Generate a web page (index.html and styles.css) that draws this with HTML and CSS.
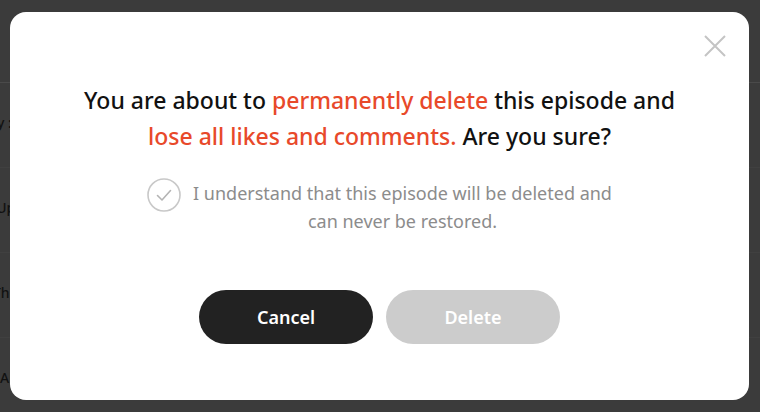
FILE: index.html
```html
<!DOCTYPE html>
<html lang="en">
<head>
    <meta charset="UTF-8">
    <meta name="viewport" content="width=device-width, initial-scale=1.0">
    <title>Delete episode</title>
    <link rel="stylesheet" href="styles.css">
</head>
<body>
    <!-- page behind the overlay -->
    <div class="page">
        <div class="page-header"></div>
        <div class="page-row"><span class="row-text">Summary :</span></div>
        <div class="page-row"><span class="row-text">Last Up</span></div>
        <div class="page-row"><span class="row-text">Theme</span></div>
        <div class="page-row"><span class="row-text">All</span></div>
    </div>

    <div class="overlay">
        <div class="modal">
            <button class="close-button" aria-label="Close">
                <svg width="22" height="22" viewBox="0 0 22 22">
                    <path d="M1 1 L21 21 M21 1 L1 21" stroke="#c4c4c4" stroke-width="2" fill="none"/>
                </svg>
            </button>

            <p class="modal-title">
                You are about to <span class="warn">permanently delete</span> this episode and<br>
                <span class="warn">lose all likes and comments.</span> Are you sure?
            </p>

            <label class="confirm-row">
                <span class="check-circle">
                    <svg width="34" height="34" viewBox="0 0 34 34">
                        <circle cx="17" cy="17" r="16" stroke="#c8c8c8" stroke-width="1.6" fill="none"/>
                        <path d="M10.5 17.5 L15 22 L23.5 12.5" stroke="#b4b4b4" stroke-width="1.6" fill="none" stroke-linecap="round" stroke-linejoin="round"/>
                    </svg>
                </span>
                <span class="confirm-text">I understand that this episode will be deleted and<br>can never be restored.</span>
            </label>

            <div class="modal-buttons">
                <button class="btn btn-cancel">Cancel</button>
                <button class="btn btn-delete" disabled>Delete</button>
            </div>
        </div>
    </div>
</body>
</html>
```

FILE: styles.css
```css
/* Delete episode dialog */
body {
    margin: 0;
    width: 760px;
    height: 412px;
    overflow: hidden;
    background-color: #3b3b3b;
    font-family: 'Noto Sans', 'Open Sans', sans-serif;
    position: relative;
}

.page {
    display: flex;
    flex-direction: column;
}

.page-header {
    height: 82px;
    border-bottom: 1px solid #4a4a4a;
}

.page-row {
    height: 84px;
    display: flex;
    align-items: center;
    border-bottom: 1px solid #404040;
    overflow: hidden;
}

.row-text {
    color: #111111;
    font-size: 14px;
    font-weight: 500;
    white-space: nowrap;
    margin-top: -6px;
    margin-left: -60px;
}

.page-row:nth-child(3) .row-text { margin-left: -35px; }
.page-row:nth-child(4) .row-text { margin-left: -7px; }
.page-row:nth-child(5) .row-text { margin-left: 0; }

.overlay {
    position: absolute;
    inset: 0;
}

.modal {
    position: absolute;
    left: 10px;
    top: 12px;
    width: 739px;
    height: 388px;
    box-sizing: border-box;
    background-color: #ffffff;
    border-radius: 16px;
    padding-top: 70px;
    display: flex;
    flex-direction: column;
    align-items: center;
}

.close-button {
    position: absolute;
    top: 23px;
    right: 23px;
    width: 22px;
    height: 22px;
    padding: 0;
    border: none;
    background: none;
    cursor: pointer;
}

.close-button svg {
    display: block;
}

.modal-title {
    margin: 0;
    font-size: 23px;
    font-weight: 500;
    line-height: 36px;
    color: #111111;
    text-align: center;
}

.warn {
    color: #e8492a;
}

.confirm-row {
    margin-top: 25px;
    display: flex;
    align-items: flex-start;
    gap: 12px;
    cursor: pointer;
}

.check-circle svg {
    display: block;
    margin-top: -1px;
}

.confirm-text {
    font-size: 18px;
    line-height: 28px;
    color: #8c8c8c;
    text-align: center;
}

.modal-buttons {
    margin-top: 55px;
    display: flex;
    gap: 13px;
}

.btn {
    width: 174px;
    height: 54px;
    border: none;
    border-radius: 27px;
    font-family: inherit;
    font-size: 18px;
    font-weight: 600;
    color: #ffffff;
    cursor: pointer;
}

.btn-cancel {
    background-color: #222222;
}

.btn-delete {
    background-color: #cccccc;
    cursor: default;
}
```
